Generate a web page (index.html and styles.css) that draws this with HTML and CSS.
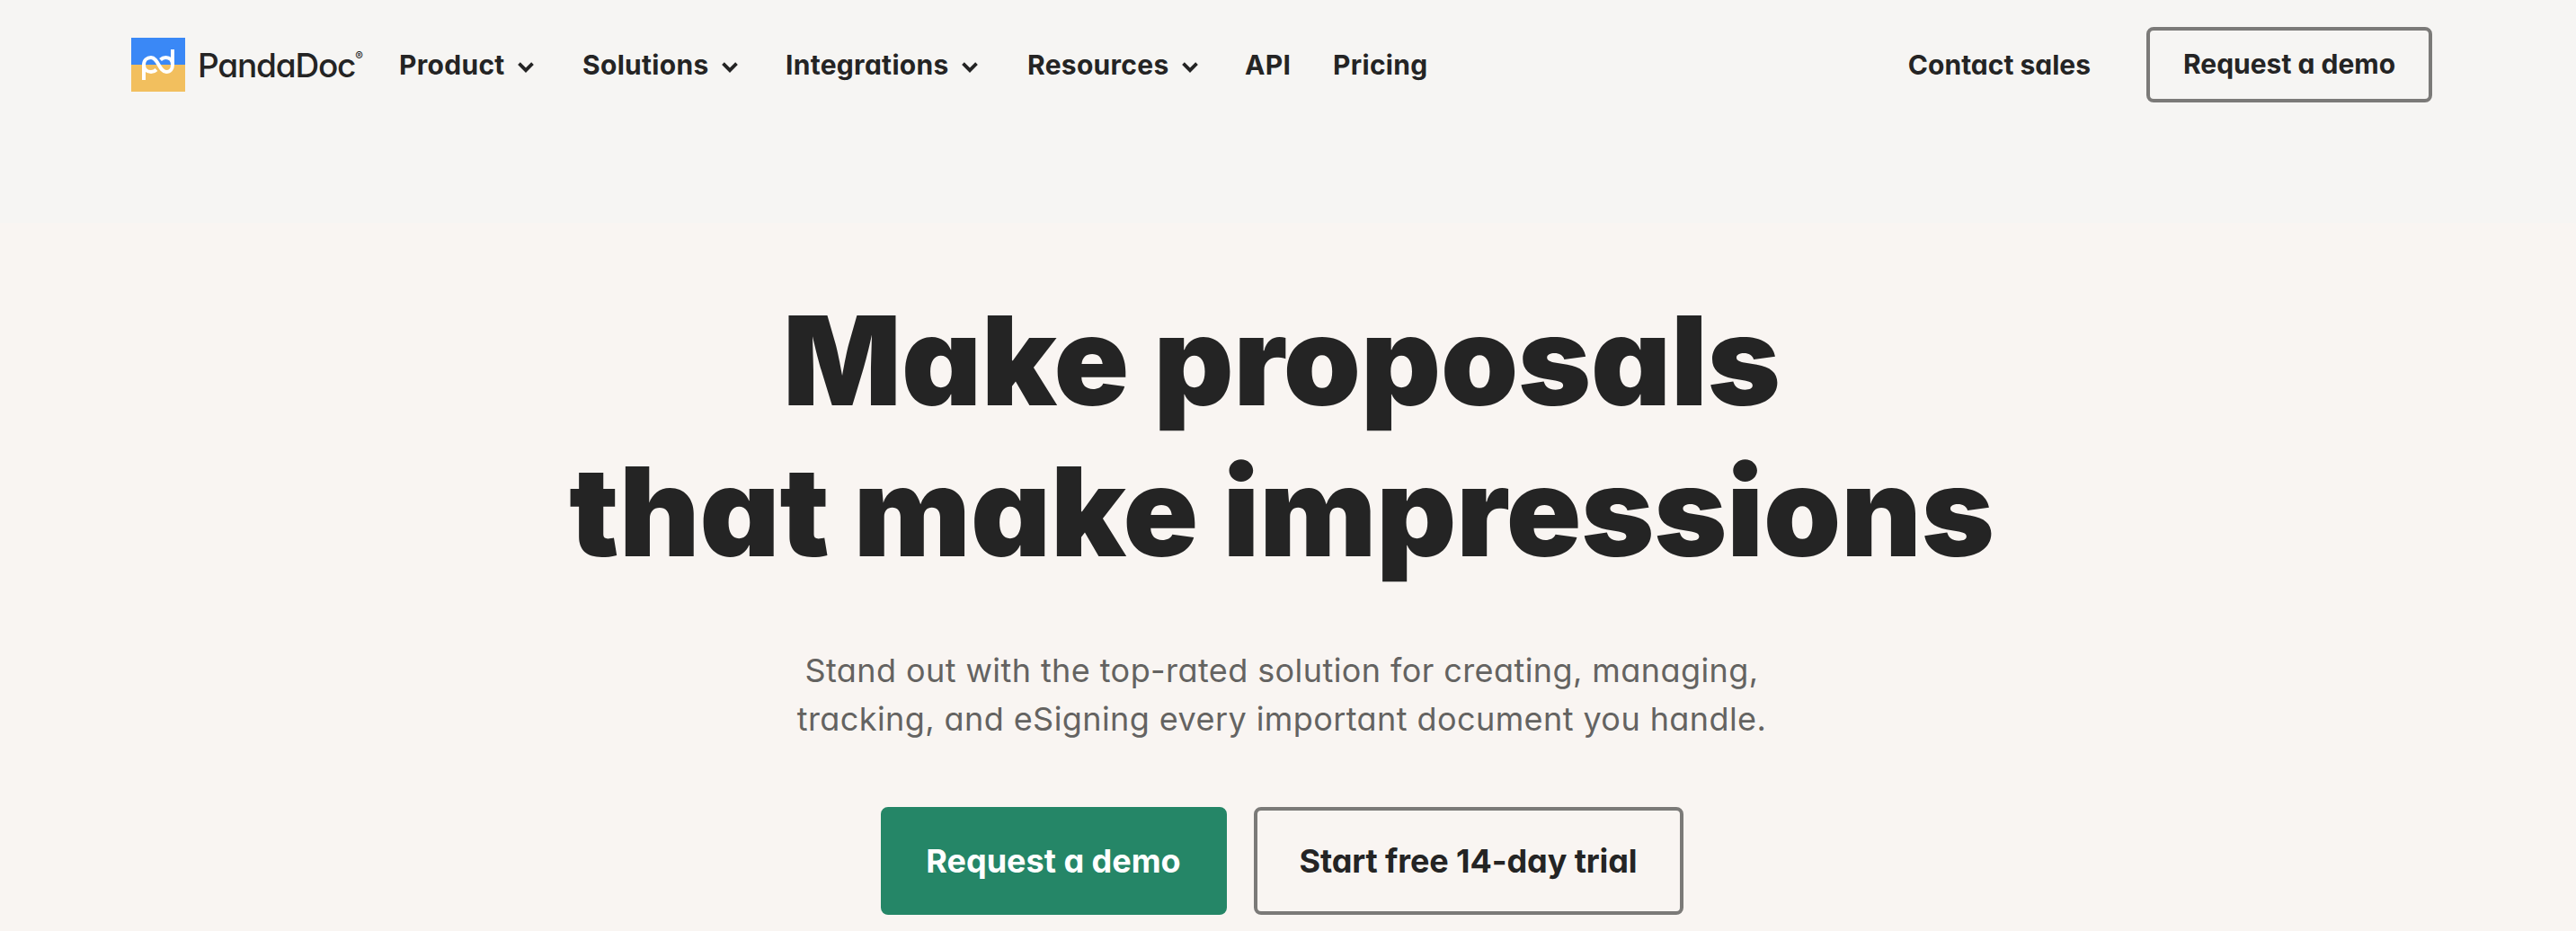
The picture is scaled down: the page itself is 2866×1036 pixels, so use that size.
FILE: index.html
```
<!DOCTYPE html>
<html lang="en">
<head>
    <meta charset="UTF-8">
    <meta name="viewport" content="width=device-width, initial-scale=1.0">
    <title>PandaDoc</title>
    <link rel="stylesheet" href="styles.css">
</head>
<body>
    <header class="header">
        <a class="logo" href="#">
            <svg class="logo-mark" viewBox="0 0 60 60">
                <rect width="60" height="30" fill="#3a88f6"/>
                <rect y="30" width="60" height="30" fill="#f2bf5e"/>
                <g fill="none" stroke="#fff" stroke-width="4">
                    <path d="M14 47V30C14 25 17.5 22 22 22C30 22 31 38 39 38C43.5 38 46 34.5 46 30V13"/>
                    <path d="M14 30C14 35 17.5 38 22 38C24.5 38 26.5 37 28 35.5"/>
                    <path d="M46 30C46 25 43 22 38.5 22C36 22 34 23 32.5 24.5"/>
                </g>
            </svg>
            <span class="logo-text">PandaDoc</span><span class="logo-reg">®</span>
        </a>
        <nav class="nav">
            <a href="#">Product <svg class="chevron" viewBox="0 0 18 12"><path d="M1.5 1.7L9 9.2L16.5 1.7"/></svg></a>
            <a href="#">Solutions <svg class="chevron" viewBox="0 0 18 12"><path d="M1.5 1.7L9 9.2L16.5 1.7"/></svg></a>
            <a href="#">Integrations <svg class="chevron" viewBox="0 0 18 12"><path d="M1.5 1.7L9 9.2L16.5 1.7"/></svg></a>
            <a href="#">Resources <svg class="chevron" viewBox="0 0 18 12"><path d="M1.5 1.7L9 9.2L16.5 1.7"/></svg></a>
            <a href="#">API</a>
            <a href="#">Pricing</a>
        </nav>
        <div class="actions">
            <a class="contact" href="#">Contact sales</a>
            <a class="btn btn-small" href="#">Request a demo</a>
        </div>
    </header>

    <main class="hero">
        <h1>Make proposals<br>that make impressions</h1>
        <p>Stand out with the top-rated solution for creating, managing,<br>tracking, and eSigning every important document you handle.</p>
        <div class="buttons">
            <a class="btn btn-green" href="#">Request a demo</a>
            <a class="btn btn-trial" href="#">Start free 14-day trial</a>
        </div>
    </main>
</body>
</html>
```
FILE: styles.css
```
* {
    box-sizing: border-box;
}
body {
    margin: 0;
    height: 1036px;
    overflow: hidden;
    background-color: #f9f5f2;
    color: #242424;
    font-family: Inter, "Liberation Sans", sans-serif;
    font-feature-settings: "cv11"; /* single-storey a */
}
a {
    color: inherit;
    text-decoration: none;
    white-space: nowrap;
}

/* header */
.header {
    display: flex;
    align-items: flex-start;
    height: 248px;
    padding: 30px 160px 0 146px;
    background-color: #f6f5f3;
    font-size: 30px;
    font-weight: 660;
}
.logo {
    display: flex;
    align-items: center;
    width: 298px;
    height: 84px;
}
.logo-mark {
    width: 60px;
    height: 60px;
    margin-right: 14px;
}
.logo-text {
    font-size: 37px;
    font-weight: 540;
    letter-spacing: -1.2px;
}
.logo-reg {
    font-size: 13px;
    font-weight: 500;
    margin-bottom: 20px;
}
.nav {
    display: grid;
    grid-template-columns: 204px 226px 269px 242px 98px auto;
    letter-spacing: 0.3px;
}
.nav a {
    display: flex;
    align-items: center;
    gap: 14px;
    height: 84px;
}
.chevron {
    width: 18px;
    height: 12px;
    margin-top: 6px;
    fill: none;
    stroke: #242424;
    stroke-width: 3.8;
}
.actions {
    display: flex;
    align-items: center;
    margin-left: auto;
}
.contact {
    margin-right: 62px;
}
.btn {
    display: flex;
    align-items: center;
    justify-content: center;
    border: 4px solid #7b7a78;
    border-radius: 8px;
}
.btn-small {
    width: 318px;
    height: 84px;
    padding-bottom: 2px;
}

.hero {
    display: flex;
    flex-direction: column;
    align-items: center;
    padding: 69px 14px 0 0;
    text-align: center;
}
.hero h1 {
    margin: 0;
    font-size: 138px;
    line-height: 168px;
    font-weight: 900;
    letter-spacing: -0.1px;
}
.hero p {
    margin: 66px 0 71px;
    color: #646361;
    font-size: 36px;
    line-height: 54px;
    font-weight: 400;
    letter-spacing: 0.42px;
}
.buttons {
    display: flex;
    gap: 30px;
    font-size: 36px;
    font-weight: 660;
}
.buttons .btn {
    height: 120px;
}
.btn-green {
    width: 385px;
    border-color: #258667;
    background-color: #258667;
    color: #fff;
}
.btn-trial {
    width: 478px;
    letter-spacing: -0.1px;
}
```
